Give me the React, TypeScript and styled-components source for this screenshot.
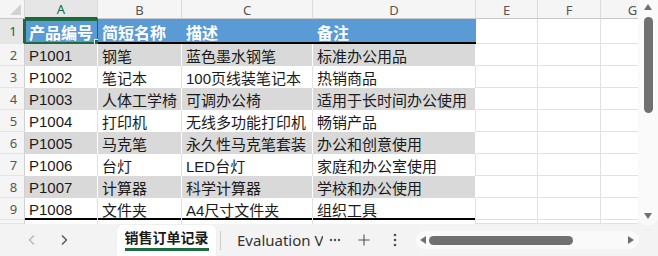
import React from "react";
import styled, { createGlobalStyle, css } from "styled-components";

const Global = createGlobalStyle`
  html, body { margin: 0; padding: 0; background: #f3f3f3; }
  body { font-family: "Noto Sans", "Noto Sans CJK SC", sans-serif; }
`;

const Frame = styled.div`
  width: 658px;
  height: 256px;
  display: flex;
  flex-direction: column;
  overflow: hidden;
  background: #f3f3f3;
`;

const Top = styled.div`
  display: flex;
  height: 224px;
`;

const Sheet = styled.div`
  display: grid;
  grid-template-columns: 25px 73px 84px 131px 163px 62px 63px 64px;
  grid-template-rows: 19px 25px repeat(8, 22px) 4px;
  width: 638px;
  flex: 0 0 638px;
  background: #fff;
  overflow: hidden;
`;

const Corner = styled.div`
  background: #f5f5f5;
  border-right: 1px solid #d6d6d6;
  border-bottom: 1px solid #c8c8c8;
  box-sizing: border-box;
  position: relative;
  &::after {
    content: "";
    position: absolute;
    right: 3px;
    bottom: 3px;
    width: 0;
    height: 0;
    border-left: 11px solid transparent;
    border-bottom: 11px solid #d2d2d2;
  }
`;

const ColHead = styled.div<{ $sel?: boolean }>`
  background: ${(p) => (p.$sel ? "#e6e6e6" : "#f5f5f5")};
  color: ${(p) => (p.$sel ? "#17683c" : "#555")};
  border-right: 1px solid #dadada;
  border-bottom: ${(p) => (p.$sel ? "2px solid #17683c" : "1px solid #c8c8c8")};
  box-sizing: border-box;
  font-size: 13px;
  display: flex;
  align-items: center;
  justify-content: center;
  padding-top: 1px;
  overflow: hidden;
  white-space: nowrap;
`;

const RowHead = styled.div<{ $sel?: boolean }>`
  background: ${(p) => (p.$sel ? "#e6e6e6" : "#f5f5f5")};
  color: ${(p) => (p.$sel ? "#17683c" : "#555")};
  border-right: ${(p) => (p.$sel ? "2px solid #17683c" : "1px solid #d0d0d0")};
  border-bottom: 1px solid #e4e4e4;
  box-sizing: border-box;
  font-size: 13px;
  display: flex;
  align-items: center;
  justify-content: center;
  padding-left: 3px;
`;

type Kind = "head" | "gray" | "white" | "empty";

const Cell = styled.div<{ $kind: Kind; $thickBottom?: boolean }>`
  box-sizing: border-box;
  display: flex;
  align-items: center;
  padding: 1px 0 0 4px;
  white-space: nowrap;
  overflow: visible;
  position: relative;
  font-family: "Liberation Sans", "Noto Sans CJK SC", sans-serif;
  font-size: 15px;
  color: #1a1a1a;
  ${(p) =>
    p.$kind === "head" &&
    css`
      background: #5b9bd5;
      color: #fff;
      font-weight: 700;
      font-size: 16px;
      box-shadow: inset 0 -2px 0 #000;
    `}
  ${(p) =>
    p.$kind === "gray" &&
    css`
      background: #d9d9d9;
      border-right: 1px solid #fff;
    `}
  ${(p) =>
    p.$kind === "white" &&
    css`
      background: #fff;
      border-right: 1px solid #e1e1e1;
    `}
  ${(p) =>
    p.$kind === "empty" &&
    css`
      background: #fff;
      border-right: 1px solid #e1e1e1;
      border-bottom: 1px solid #e1e1e1;
    `}
  ${(p) =>
    p.$thickBottom &&
    css`
      box-shadow: inset 0 -2px 0 #000;
    `}
`;

const Selection = styled.div`
  position: absolute;
  left: -1px;
  top: 0;
  right: -1px;
  bottom: 0;
  border: 2px solid #1d6b41;
  pointer-events: none;
  &::after {
    content: "";
    position: absolute;
    right: -4px;
    bottom: -4px;
    width: 5px;
    height: 5px;
    background: #1d6b41;
    border: 1px solid #fff;
  }
`;

const VScroll = styled.div`
  width: 20px;
  height: 225px;
  background: #fafafa;
  border-radius: 0 0 8px 8px;
  position: relative;
  display: flex;
  flex-direction: column;
  align-items: center;
`;

const ArrowUp = styled.div`
  margin-top: 4px;
  width: 0;
  height: 0;
  border-left: 4px solid transparent;
  border-right: 4px solid transparent;
  border-bottom: 6px solid #707070;
`;

const ArrowDown = styled.div`
  margin-top: auto;
  margin-bottom: 6px;
  width: 0;
  height: 0;
  border-left: 4px solid transparent;
  border-right: 4px solid transparent;
  border-top: 6px solid #707070;
`;

const VThumb = styled.div`
  margin-top: 7px;
  width: 9px;
  height: 96px;
  border-radius: 5px;
  background: #707070;
`;

const TabBar = styled.div`
  height: 32px;
  display: flex;
  align-items: stretch;
  background: #f3f3f3;
`;

const Nav = styled.div<{ $dim?: boolean }>`
  width: 32px;
  display: flex;
  align-items: center;
  justify-content: center;
  color: ${(p) => (p.$dim ? "#b5b5b5" : "#505050")};
`;

const NavGroup = styled.div`
  display: flex;
  padding-left: 16px;
  width: 101px;
`;

const ActiveTab = styled.div`
  margin-top: 1px;
  width: 99px;
  background: #fff;
  border-radius: 5px 5px 0 0;
  box-shadow: 0 0 1px rgba(0, 0, 0, 0.15);
  display: flex;
  flex-direction: column;
  align-items: center;
  justify-content: center;
  font-family: "Noto Sans CJK SC", sans-serif;
  font-weight: 700;
  font-size: 14px;
  color: #1a1a1a;
  padding-bottom: 3px;
`;

const TabLabel = styled.span`
  border-bottom: 3px solid #1d6b41;
  line-height: 19px;
  padding-bottom: 1px;
`;

const Sep = styled.div`
  width: 1px;
  background: #cfcfcf;
  margin: 7px 16px 6px 4px;
`;

const Tab = styled.div`
  display: flex;
  align-items: center;
  font-size: 15px;
  color: #333;
  width: 86px;
  white-space: nowrap;
  overflow: hidden;
  padding-bottom: 1px;
`;

const IconBtn = styled.div<{ $w: number }>`
  width: ${(p) => p.$w}px;
  display: flex;
  align-items: center;
  justify-content: center;
  color: #505050;
`;

const HScroll = styled.div`
  margin: 7px 0 7px 7px;
  width: 223px;
  background: #fafafa;
  border-radius: 9px;
  display: flex;
  align-items: center;
  padding: 0 5px 0 4px;
  box-sizing: border-box;
`;

const ArrowLeft = styled.div`
  width: 0;
  height: 0;
  border-top: 4px solid transparent;
  border-bottom: 4px solid transparent;
  border-right: 6px solid #707070;
`;

const ArrowRight = styled.div`
  margin-left: auto;
  width: 0;
  height: 0;
  border-top: 4px solid transparent;
  border-bottom: 4px solid transparent;
  border-left: 6px solid #707070;
`;

const HThumb = styled.div`
  margin-left: 3px;
  width: 144px;
  height: 9px;
  border-radius: 5px;
  background: #707070;
`;

const cols = ["A", "B", "C", "D", "E", "F", "G"];
const header = ["产品编号", "简短名称", "描述", "备注"];
const rows = [
  ["P1001", "钢笔", "蓝色墨水钢笔", "标准办公用品"],
  ["P1002", "笔记本", "100页线装笔记本", "热销商品"],
  ["P1003", "人体工学椅", "可调办公椅", "适用于长时间办公使用"],
  ["P1004", "打印机", "无线多功能打印机", "畅销产品"],
  ["P1005", "马克笔", "永久性马克笔套装", "办公和创意使用"],
  ["P1006", "台灯", "LED台灯", "家庭和办公室使用"],
  ["P1007", "计算器", "科学计算器", "学校和办公使用"],
  ["P1008", "文件夹", "A4尺寸文件夹", "组织工具"],
];

const Chevron = ({ dir }: { dir: "l" | "r" }) => (
  <svg width="10" height="12" viewBox="0 0 10 12" fill="none" stroke="currentColor" strokeWidth="1.3">
    {dir === "l" ? <path d="M7 1.5 L2.5 6 L7 10.5" /> : <path d="M3 1.5 L7.5 6 L3 10.5" />}
  </svg>
);

export default function App() {
  return (
    <Frame>
      <Global />
      <Top>
        <Sheet>
          <Corner />
          {cols.map((c, i) => (
            <ColHead key={c} $sel={i === 0}>
              {c}
            </ColHead>
          ))}
          <RowHead $sel>1</RowHead>
          {header.map((h, i) => (
            <Cell key={h} $kind="head">
              {h}
              {i === 0 && <Selection />}
            </Cell>
          ))}
          {[0, 1, 2].map((i) => (
            <Cell key={"h" + i} $kind="empty" />
          ))}
          {rows.map((r, ri) => (
            <React.Fragment key={ri}>
              <RowHead>{ri + 2}</RowHead>
              {r.map((v, ci) => (
                <Cell key={ci} $kind={ri % 2 === 0 ? "gray" : "white"} $thickBottom={ri === 7}>
                  {v}
                </Cell>
              ))}
              {[0, 1, 2].map((i) => (
                <Cell key={"e" + i} $kind="empty" />
              ))}
            </React.Fragment>
          ))}
          <RowHead />
          {[0, 1, 2, 3, 4, 5, 6].map((i) => (
            <Cell key={"z" + i} $kind={i < 4 ? "white" : "empty"} />
          ))}
        </Sheet>
        <VScroll>
          <ArrowUp />
          <VThumb />
          <ArrowDown />
        </VScroll>
      </Top>
      <TabBar>
        <NavGroup>
          <Nav $dim>
            <Chevron dir="l" />
          </Nav>
          <Nav>
            <Chevron dir="r" />
          </Nav>
        </NavGroup>
        <ActiveTab>
          <TabLabel>销售订单记录</TabLabel>
        </ActiveTab>
        <Sep />
        <Tab>Evaluation V</Tab>
        <IconBtn $w={24}>
          <svg width="12" height="4" viewBox="0 0 12 4" fill="currentColor">
            <circle cx="2" cy="2" r="1.2" />
            <circle cx="6" cy="2" r="1.2" />
            <circle cx="10" cy="2" r="1.2" />
          </svg>
        </IconBtn>
        <IconBtn $w={34}>
          <svg width="12" height="12" viewBox="0 0 12 12" stroke="currentColor" strokeWidth="1.1">
            <path d="M6 0.5 V11.5 M0.5 6 H11.5" />
          </svg>
        </IconBtn>
        <IconBtn $w={28}>
          <svg width="4" height="14" viewBox="0 0 4 14" fill="currentColor">
            <circle cx="2" cy="2" r="1.3" />
            <circle cx="2" cy="7" r="1.3" />
            <circle cx="2" cy="12" r="1.3" />
          </svg>
        </IconBtn>
        <HScroll>
          <ArrowLeft />
          <HThumb />
          <ArrowRight />
        </HScroll>
      </TabBar>
    </Frame>
  );
}
